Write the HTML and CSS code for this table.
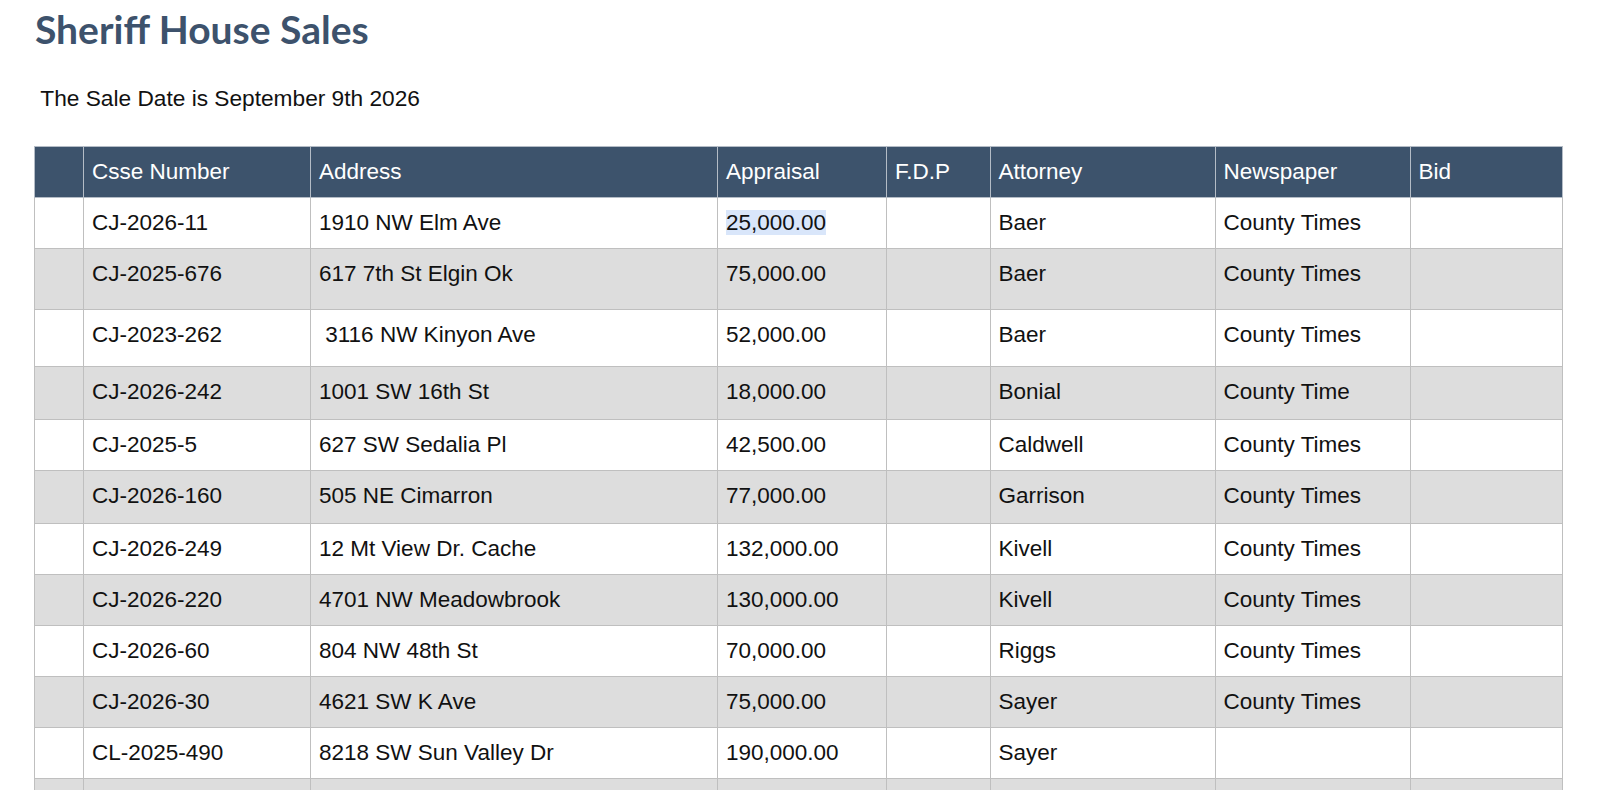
FILE: index.html
```html
<!DOCTYPE html>
<html lang="en">
<head>
<meta charset="utf-8">
<title>Sheriff House Sales</title>
<link rel="stylesheet" href="styles.css">
</head>
<body>
<div class="page">
  <h1 class="title">Sheriff House Sales</h1>
  <p class="sale-date">&nbsp;The Sale Date is September 9th 2026</p>
  <table class="sales">
    <colgroup>
      <col class="c-idx">
      <col class="c-case">
      <col class="c-addr">
      <col class="c-appr">
      <col class="c-fdp">
      <col class="c-atty">
      <col class="c-news">
      <col class="c-bid">
    </colgroup>
    <thead>
      <tr>
        <th></th>
        <th>Csse Number</th>
        <th>Address</th>
        <th>Appraisal</th>
        <th>F.D.P</th>
        <th>Attorney</th>
        <th>Newspaper</th>
        <th>Bid</th>
      </tr>
    </thead>
    <tbody>
      <tr>
        <td></td><td>CJ-2026-11</td><td>1910 NW Elm Ave</td><td><span class="sel">25,000.00</span></td><td></td><td>Baer</td><td>County Times</td><td></td>
      </tr>
      <tr class="extra-10">
        <td></td><td>CJ-2025-676</td><td>617 7th St Elgin Ok</td><td>75,000.00</td><td></td><td>Baer</td><td>County Times</td><td></td>
      </tr>
      <tr class="extra-6">
        <td></td><td>CJ-2023-262</td><td>&nbsp;3116 NW Kinyon Ave</td><td>52,000.00</td><td></td><td>Baer</td><td>County Times</td><td></td>
      </tr>
      <tr class="extra-2">
        <td></td><td>CJ-2026-242</td><td>1001 SW 16th St</td><td>18,000.00</td><td></td><td>Bonial</td><td>County Time</td><td></td>
      </tr>
      <tr>
        <td></td><td>CJ-2025-5</td><td>627 SW Sedalia Pl</td><td>42,500.00</td><td></td><td>Caldwell</td><td>County Times</td><td></td>
      </tr>
      <tr class="extra-2">
        <td></td><td>CJ-2026-160</td><td>505 NE Cimarron</td><td>77,000.00</td><td></td><td>Garrison</td><td>County Times</td><td></td>
      </tr>
      <tr>
        <td></td><td>CJ-2026-249</td><td>12 Mt View Dr. Cache</td><td>132,000.00</td><td></td><td>Kivell</td><td>County Times</td><td></td>
      </tr>
      <tr>
        <td></td><td>CJ-2026-220</td><td>4701 NW Meadowbrook</td><td>130,000.00</td><td></td><td>Kivell</td><td>County Times</td><td></td>
      </tr>
      <tr>
        <td></td><td>CJ-2026-60</td><td>804 NW 48th St</td><td>70,000.00</td><td></td><td>Riggs</td><td>County Times</td><td></td>
      </tr>
      <tr>
        <td></td><td>CJ-2026-30</td><td>4621 SW K Ave</td><td>75,000.00</td><td></td><td>Sayer</td><td>County Times</td><td></td>
      </tr>
      <tr>
        <td></td><td>CL-2025-490</td><td>8218 SW Sun Valley Dr</td><td>190,000.00</td><td></td><td>Sayer</td><td></td><td></td>
      </tr>
      <tr>
        <td></td><td>&nbsp;</td><td>&nbsp;</td><td>&nbsp;</td><td></td><td>&nbsp;</td><td>&nbsp;</td><td></td>
      </tr>
    </tbody>
  </table>
</div>
</body>
</html>
```

FILE: styles.css
```css
html, body {
  margin: 0;
  padding: 0;
  background: #ffffff;
}

body {
  font-family: "Liberation Sans", Arial, sans-serif;
  color: #111111;
}

.page {
  padding: 0 35px 40px 34px;
}

.title {
  margin: 6px 0 0 1px;
  font-family: Lato, "Liberation Sans", sans-serif;
  font-weight: 700;
  font-size: 39px;
  line-height: 47px;
  color: #3d526c;
}

.sale-date {
  margin: 32px 0 0 0;
  font-size: 22.7px;
  line-height: 26px;
  color: #111111;
}

.sales {
  margin-top: 35px;
  width: 100%;
  border-collapse: collapse;
  table-layout: fixed;
  font-size: 22.5px;
  line-height: 26px;
}

.c-idx { width: 49px; }
.c-case { width: 227px; }
.c-addr { width: 407px; }
.c-appr { width: 169px; }
.c-fdp { width: 103.5px; }
.c-atty { width: 225px; }
.c-news { width: 195px; }
.c-bid { width: 152.5px; }

.sales th,
.sales td {
  border: 1px solid #bfbfbf;
  padding: 12px 9px 12px 8px;
  text-align: left;
  vertical-align: top;
  white-space: nowrap;
  overflow: hidden;
}

.sales th {
  background: #3d536c;
  color: #ffffff;
  font-weight: 400;
  border-color: #b4bcc6;
}

.sales tbody tr:nth-child(even) td {
  background: #dddddd;
}

.sales tbody tr.extra-10 td { padding-bottom: 22px; }
.sales tbody tr.extra-6 td { padding-bottom: 18px; }
.sales tbody tr.extra-2 td { padding-bottom: 14px; }

.sel {
  background: #d9e6fa;
}
```
